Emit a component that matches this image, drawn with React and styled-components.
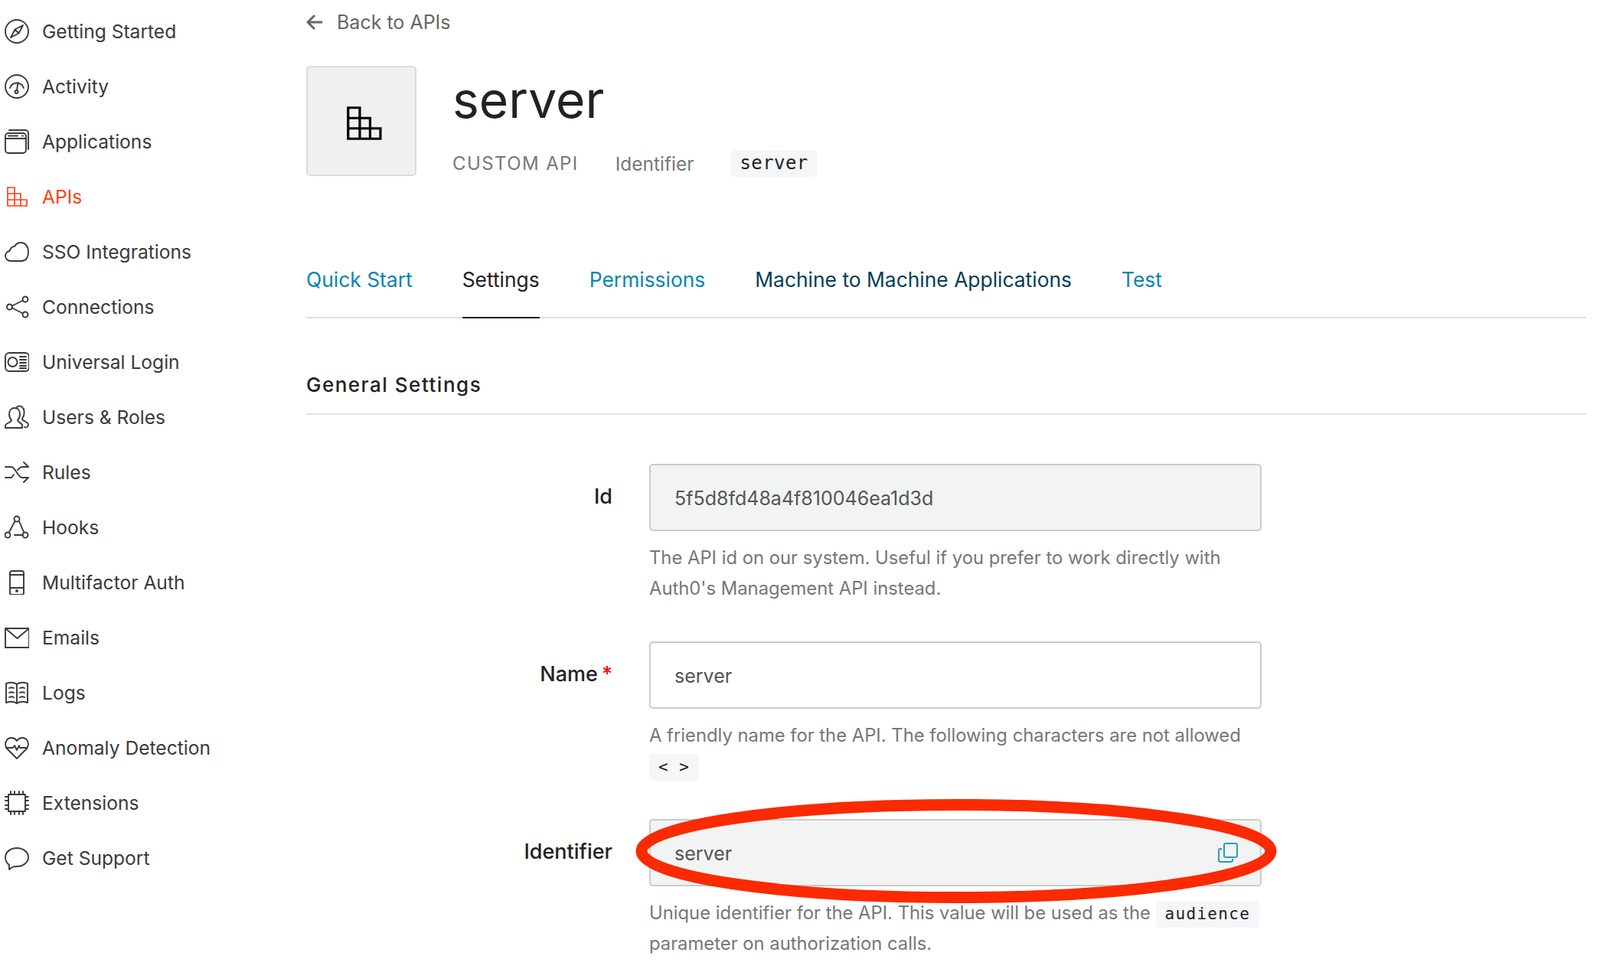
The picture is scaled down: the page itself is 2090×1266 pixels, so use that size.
import React from 'react';
import styled, { createGlobalStyle } from 'styled-components';

const Global = createGlobalStyle`
  html, body { margin: 0; padding: 0; background: #fff; }
  body { font-family: Inter, "Noto Sans", sans-serif; overflow: hidden; }
  * { box-sizing: border-box; }
`;

const Page = styled.div`
  display: flex;
  width: 2090px;
  height: 1266px;
  overflow: hidden;
`;

const Sidebar = styled.nav`
  width: 400px;
  flex: none;
  padding: 5px 0 0 6px;
`;

const NavItem = styled.a`
  display: flex;
  align-items: center;
  gap: 17px;
  height: 72px;
  font-size: 24.6px;
  color: ${(p) => (p.$active ? '#ff4115' : '#3a3a3a')};
  svg { flex: none; }
`;

const Main = styled.main`
  width: 1672px;
  flex: none;
`;

const BackLink = styled.a`
  display: flex;
  align-items: center;
  gap: 18px;
  height: 57px;
  font-size: 25px;
  color: #666;
`;

const Head = styled.header`
  display: flex;
  gap: 47px;
  margin-top: 29px;
`;

const IconBox = styled.div`
  width: 144px;
  height: 144px;
  display: flex;
  align-items: center;
  justify-content: center;
  padding: 5px 0 0 5px;
  background: #f0f0f0;
  border: 2px solid #dcdcdc;
  border-radius: 5px;
  color: #000;
`;

const Title = styled.h1`
  margin: 0;
  font-size: 66px;
  line-height: 88px;
  font-weight: 400;
  color: #222;
`;

const Meta = styled.div`
  display: flex;
  align-items: center;
  gap: 48px;
  margin-top: 22px;
  font-size: 24.5px;
  color: #777;
`;

const Caps = styled.span`
  letter-spacing: 1.4px;
  font-size: 24px;
`;

const Code = styled.code`
  display: inline-block;
  font-family: "DejaVu Sans Mono", "Liberation Mono", monospace;
  font-size: ${(p) => p.$size || 21}px;
  letter-spacing: ${(p) => p.$spacing || 1}px;
  line-height: 35px;
  padding: 0 12px;
  background: #f5f6f8;
  border-radius: 5px;
  color: #222;
`;

const Tabs = styled.div`
  display: flex;
  gap: 65px;
  margin-top: 83px;
  border-bottom: 2px solid #dedede;
  font-size: 26.4px;
`;

const Tab = styled.a`
  height: 102px;
  line-height: 102px;
  margin-bottom: -2px;
  color: ${(p) => p.$color || '#0a85ad'};
  border-bottom: 2px solid ${(p) => (p.$active ? '#222' : 'transparent')};
`;

const SectionTitle = styled.h2`
  margin: 0;
  padding: 62px 0 0;
  height: 126px;
  font-size: 26px;
  line-height: 50px;
  font-weight: 500;
  letter-spacing: 1.5px;
  color: #222;
  border-bottom: 2px solid #e2e2e2;
`;

const Form = styled.div`
  margin-top: 64px;
`;

const Row = styled.div`
  position: relative;
  display: grid;
  grid-template-columns: 400px 800px;
  column-gap: 48px;
  margin-bottom: 49px;
`;

const Label = styled.label`
  text-align: right;
  font-size: 27px;
  line-height: 86px;
  font-weight: 500;
  color: #222;
  white-space: nowrap;
  span { color: #f00; margin-left: 5px; }
`;

const Field = styled.div`
  position: relative;
`;

const Input = styled.input`
  display: block;
  width: 800px;
  height: 88px;
  padding: 2px 31px 0;
  font: inherit;
  font-size: 25px;
  color: #555;
  background: ${(p) => (p.readOnly ? '#f2f4f3' : '#fff')};
  border: 2px solid #cbcbcb;
  border-radius: 5px;
  outline: none;
`;

const Help = styled.p`
  margin: 15px 0 0;
  width: 810px;
  font-size: 23.8px;
  line-height: 40px;
  color: #777;
`;

const CopyBtn = styled.span`
  position: absolute;
  right: 31px;
  top: 31px;
  display: flex;
`;

const Ring = styled.svg`
  position: absolute;
  left: 419px;
  top: -30px;
  pointer-events: none;
`;

const Ico = ({ children, size = 32 }) => (
  <svg width={size} height={size} viewBox="0 0 32 32" fill="none" stroke="currentColor" strokeWidth="1.9" strokeLinecap="round" strokeLinejoin="round">
    {children}
  </svg>
);

const Stairs = ({ size, width = 1.7 }) => (
  <svg width={size} height={size} viewBox="0 0 32 32" fill="none" stroke="currentColor" strokeWidth={width}>
    <path d="M4 4h9v24H4zM4 12h17v16M4 20h25v8H13M13 20v8M21 20v8" />
  </svg>
);

const icons = {
  compass: <><circle cx="16" cy="16" r="15" /><path d="M24 8l-5.500 10.500L8 24l5.500-10.500zM13.500 13.500l5 5" /></>,
  gauge: <><circle cx="16" cy="16" r="15" /><path d="M7 18a9.500 9.500 0 0 1 18 0" /><path d="M17.500 11l-1.500 10" /><circle cx="15.500" cy="23" r="2" /></>,
  apps: <><rect x="1" y="5" width="27" height="26" rx="4" /><path d="M6 1h21a4 4 0 0 1 4 4v21M1 12h27M5 8.500h12M23 8.500h1" /></>,
  cloud: <path d="M8 28c-4 0-7-3-7-6.500 0-3.500 2.500-6 5.500-6.500C8 10 11 9 13 9c2-3.500 5-5 8-5 6 0 10 5 10 12 0 7-3 12-9 12z" />,
  share: <><circle cx="6.500" cy="16" r="3.500" /><circle cx="27" cy="6" r="3.500" /><circle cx="27" cy="26" r="3.500" /><path d="M10 14.500L24 7.500M10 17.500L24 24.500" /></>,
  card: <><rect x="1" y="4" width="31" height="24" rx="5" /><circle cx="10.500" cy="16" r="6" /><path d="M20 9h8M20 13h8M20 17h8M20 21h8M20 24h8" /></>,
  users: <><path d="M1 30v-3c0-3 8-4 8-7-2-2-3-4-3-8 0-5 3-8 7-8s7 3 7 8c0 4-1 6-3 8 0 3 6 3 6 7v3z" /><path d="M16 3c2-2 5-2 7 0 3 2 3 8 2 11-1 2-2 3-2 5 1 2 8 3 8 7 0 3-3 4-5 3" /></>,
  shuffle: <><path d="M1 9h8c5 0 8 14 14 14h8M1 23h8l3-4M17 13c2-2 3-4 6-4h8M25 3l6 6-6 0M25 29l6-6-6 0" /></>,
  hooks: <><circle cx="16" cy="5" r="3.500" /><circle cx="4" cy="26" r="3.500" /><circle cx="27" cy="26" r="3.500" /><path d="M13.500 8L6 22M19 8l6 14M13 26h11" /></>,
  phone: <><rect x="7" y="1" width="18" height="31" rx="2.500" /><path d="M7 6h18M7 23h18" /><circle cx="16" cy="27" r="1" fill="currentColor" /></>,
  mail: <><rect x="1" y="4" width="31" height="25" /><path d="M1 4l15.500 13L32 4" /></>,
  book: <><path d="M2 4c6-2 10-2 14 1 4-3 8-3 14-1v25c-6-2-10-2-14 1-4-3-8-3-14-1zM16 5v25M6 10c2-1 4-1 6 0M6 16c2-1 4-1 6 0M6 22c2-1 4-1 6 0M20 10c2-1 4-1 6 0M20 16c2-1 4-1 6 0M20 22c2-1 4-1 6 0" /></>,
  heart: <><path d="M16 30L3 17C-1 11 2 3 9 3c3 0 5 1 7 4 2-3 4-4 7-4 7 0 10 8 6 14z" /><path d="M2 16h9l2-3 3 6 3-6 1 3h9" /></>,
  chip: <><rect x="5" y="5" width="22" height="22" /><path d="M8 1v4M13 1v4M19 1v4M24 1v4M8 27v4M13 27v4M19 27v4M24 27v4M1 8h4M1 13h4M1 19h4M1 24h4M27 8h4M27 13h4M27 19h4M27 24h4" /></>,
  bubble: <path d="M16 3c8 0 15 5 15 12s-7 12-15 12c-2 0-4 0-6 1l-4 3v-6C3 23 1 19 1 15 1 8 8 3 16 3z" />,
};

const nav = [
  ['compass', 'Getting Started'],
  ['gauge', 'Activity'],
  ['apps', 'Applications'],
  ['stairs', 'APIs'],
  ['cloud', 'SSO Integrations'],
  ['share', 'Connections'],
  ['card', 'Universal Login'],
  ['users', 'Users & Roles'],
  ['shuffle', 'Rules'],
  ['hooks', 'Hooks'],
  ['phone', 'Multifactor Auth'],
  ['mail', 'Emails'],
  ['book', 'Logs'],
  ['heart', 'Anomaly Detection'],
  ['chip', 'Extensions'],
  ['bubble', 'Get Support'],
];

export default function App() {
  return (
    <Page>
      <Global />
      <Sidebar>
        {nav.map(([icon, label]) => (
          <NavItem key={label} $active={label === 'APIs'}>
            {icon === 'stairs' ? <Stairs size={32} /> : <Ico>{icons[icon]}</Ico>}
            {label}
          </NavItem>
        ))}
      </Sidebar>
      <Main>
        <BackLink>
          <svg width="22" height="22" viewBox="0 0 22 22" fill="none" stroke="#666" strokeWidth="3">
            <path d="M21 11H3M11 2l-9 9 9 9" />
          </svg>
          Back to APIs
        </BackLink>
        <Head>
          <IconBox>
            <Stairs size={54} width={1.9} />
          </IconBox>
          <div>
            <Title>server</Title>
            <Meta>
              <Caps>CUSTOM API</Caps>
              <span>Identifier</span>
              <Code $size={24} $spacing={0.4}>server</Code>
            </Meta>
          </div>
        </Head>
        <Tabs>
          <Tab>Quick Start</Tab>
          <Tab $active $color="#222">Settings</Tab>
          <Tab>Permissions</Tab>
          <Tab $color="#023e56">Machine to Machine Applications</Tab>
          <Tab>Test</Tab>
        </Tabs>
        <SectionTitle>General Settings</SectionTitle>
        <Form>
          <Row>
            <Label>Id</Label>
            <Field>
              <Input readOnly value="5f5d8fd48a4f810046ea1d3d" />
              <Help>The API id on our system. Useful if you prefer to work directly with Auth0's Management API instead.</Help>
            </Field>
          </Row>
          <Row>
            <Label>Name<span>*</span></Label>
            <Field>
              <Input defaultValue="server" />
              <Help>A friendly name for the API. The following characters are not allowed <Code>&lt; &gt;</Code></Help>
            </Field>
          </Row>
          <Row>
            <Label>Identifier</Label>
            <Field>
              <Input readOnly value="server" />
              <CopyBtn>
                <svg width="26" height="26" viewBox="0 0 26 26" fill="none" stroke="#2b9cc1" strokeWidth="2" strokeLinejoin="round">
                  <rect x="8" y="1" width="17" height="18" rx="2" />
                  <path d="M5 8H3a2 2 0 0 0-2 2v13a2 2 0 0 0 2 2h14a2 2 0 0 0 2-2v-2" />
                </svg>
              </CopyBtn>
              <Help>Unique identifier for the API. This value will be used as the <Code $spacing={1.3}>audience</Code> parameter on authorization calls.</Help>
            </Field>
            <Ring width="860" height="144" viewBox="0 0 860 144">
              <ellipse cx="430" cy="72" rx="411" ry="60.500" fill="none" stroke="#fb2a00" strokeWidth="15" />
            </Ring>
          </Row>
        </Form>
      </Main>
    </Page>
  );
}
